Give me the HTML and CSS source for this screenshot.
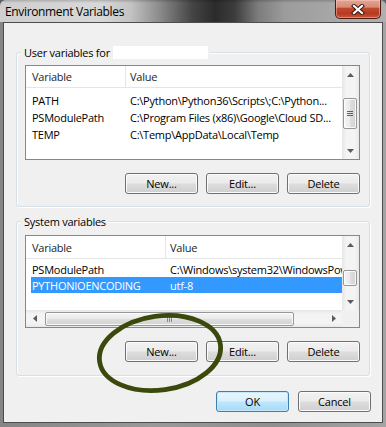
FILE: index.html
```html
<!DOCTYPE html>
<html>
<head>
<meta charset="utf-8">
<title>Environment Variables</title>
<link rel="stylesheet" href="styles.css">
</head>
<body>
<div class="window">
  <div class="titlebar">
    <span class="title">Environment Variables</span>
    <div class="close">
      <svg width="14" height="11" viewBox="0 0 14 11">
        <path d="M3 2 L11 9 M11 2 L3 9" stroke="#3b1a12" stroke-width="4.2" stroke-linecap="square" fill="none"/>
        <path d="M3 2 L11 9 M11 2 L3 9" stroke="#ffffff" stroke-width="2.2" stroke-linecap="square" fill="none"/>
      </svg>
    </div>
  </div>
  <div class="client">
    <section class="group group-user">
      <div class="group-label">User variables for <span class="redact"></span></div>
      <div class="list list-user">
        <div class="lv">
          <div class="lv-header"><div class="hcol hcol1">Variable</div><div class="hcol hcol2">Value</div></div>
          <div class="lv-body">
            <div class="lv-row"><span class="cell1">PATH</span><span class="cell2">C:\Python\Python36\Scripts\;C:\Python...</span></div>
            <div class="lv-row"><span class="cell1">PSModulePath</span><span class="cell2">C:\Program Files (x86)\Google\Cloud SD...</span></div>
            <div class="lv-row"><span class="cell1">TEMP</span><span class="cell2">C:\Temp\AppData\Local\Temp</span></div>
          </div>
        </div>
        <div class="vscroll">
          <div class="sb-arrow"><svg width="7" height="4" viewBox="0 0 7 4"><polygon points="0,4 3.5,0 7,4" fill="#5c5c5c"/></svg></div>
          <div class="sb-track-v">
            <div class="thumb-v thumb-user">
              <svg width="6" height="5" viewBox="0 0 6 5"><path d="M0 0.5H6M0 2.5H6M0 4.5H6" stroke="#616161" stroke-width="1"/></svg>
            </div>
          </div>
          <div class="sb-arrow"><svg width="7" height="4" viewBox="0 0 7 4"><polygon points="0,0 7,0 3.5,4" fill="#5c5c5c"/></svg></div>
        </div>
      </div>
      <div class="btn-row">
        <button class="btn">New...</button>
        <button class="btn">Edit...</button>
        <button class="btn">Delete</button>
      </div>
    </section>

    <section class="group group-sys">
      <div class="group-label">System variables</div>
      <div class="list list-sys">
        <div class="lv">
          <div class="lv-header"><div class="hcol hcol1">Variable</div><div class="hcol hcol2">Value</div></div>
          <div class="lv-body">
            <div class="lv-row"><span class="cell1">PSModulePath</span><span class="cell2">C:\Windows\system32\WindowsPowerShell\v1.0\Modules\</span></div>
            <div class="lv-row selected"><span class="cell1">PYTHONIOENCODING</span><span class="cell2">utf-8</span></div>
          </div>
        </div>
        <div class="vscroll">
          <div class="sb-arrow"><svg width="7" height="4" viewBox="0 0 7 4"><polygon points="0,4 3.5,0 7,4" fill="#5c5c5c"/></svg></div>
          <div class="sb-track-v">
            <div class="thumb-v thumb-sys"></div>
          </div>
          <div class="sb-arrow"><svg width="7" height="4" viewBox="0 0 7 4"><polygon points="0,0 7,0 3.5,4" fill="#5c5c5c"/></svg></div>
        </div>
        <div class="hscroll">
          <div class="sb-arrow-h"><svg width="4" height="7" viewBox="0 0 4 7"><polygon points="4,0 0,3.5 4,7" fill="#5c5c5c"/></svg></div>
          <div class="sb-track-h">
            <div class="thumb-h">
              <svg width="5" height="6" viewBox="0 0 5 6"><path d="M0.5 0V6M2.5 0V6M4.5 0V6" stroke="#8a8a8a" stroke-width="1"/></svg>
            </div>
          </div>
          <div class="sb-arrow-h"><svg width="4" height="7" viewBox="0 0 4 7"><polygon points="0,0 4,3.5 0,7" fill="#5c5c5c"/></svg></div>
        </div>
        <div class="sb-corner"></div>
      </div>
      <div class="btn-row">
        <button class="btn">New...</button>
        <button class="btn">Edit...</button>
        <button class="btn">Delete</button>
      </div>
    </section>

    <div class="dlg-row">
      <button class="btn btn-default">OK</button>
      <button class="btn">Cancel</button>
    </div>
  </div>

  <svg class="annot" width="386" height="427" viewBox="0 0 386 427">
    <ellipse cx="160" cy="353" rx="61" ry="37" transform="rotate(-8 160 353)" fill="none" stroke="#3b4a0c" stroke-width="4.8"/>
  </svg>
</div>
</body>
</html>
```

FILE: styles.css
```css
* { box-sizing: border-box; }

html, body {
  margin: 0;
  padding: 0;
}

body {
  width: 386px;
  height: 427px;
  overflow: hidden;
  background: #5b5f66;
  font-family: "Open Sans", "Noto Sans", sans-serif;
  font-size: 11px;
  letter-spacing: -0.25px;
  color: #000;
}

.window {
  position: relative;
  width: 386px;
  height: 427px;
  display: flex;
  flex-direction: column;
  border-radius: 6px 6px 0 0;
  overflow: hidden;
  background: linear-gradient(to right, #858585, #9a9a9a 40%, #8f8f8f 70%, #a4a4a4);
}

.titlebar {
  height: 22px;
  display: flex;
  align-items: center;
  padding: 2px 0 0 5px;
  background:
    linear-gradient(to bottom, rgba(0,0,0,0.18) 0, rgba(0,0,0,0) 3px),
    linear-gradient(to right, #cfcfcf 0px, #d8d8d8 100px, #c4c4c4 130px, #8a8a8a 160px, #454545 192px, #2b2b2b 215px, #3d3d3d 235px, #7c7c7c 258px, #9c9c9c 285px, #a6a6a6 330px, #b0b0b0 386px);
}

.title {
  font-size: 12px;
  letter-spacing: -0.35px;
  color: #000;
  line-height: 16px;
}

.close {
  margin-left: auto;
  margin-right: 5px;
  align-self: flex-start;
  margin-top: -2px;
  width: 46px;
  height: 19px;
  border: 1px solid #4b1c12;
  border-top: none;
  border-radius: 0 0 5px 5px;
  display: flex;
  align-items: center;
  justify-content: center;
  background:
    linear-gradient(to bottom, #e4a595 0%, #d88a76 40%, #c24a2f 45%, #b73a20 75%, #c9553a 100%);
  box-shadow: inset 0 0 0 1px rgba(255, 210, 200, 0.45);
}

.client {
  flex: 1;
  margin: 0 3px 4px 3px;
  border: 1px solid #4d4d4d;
  background: #f0f0f0;
  display: flex;
  flex-direction: column;
  padding: 0 12px;
}

.group {
  border: 1px solid #d5dfe5;
  border-radius: 3px;
  box-shadow: inset 1px 1px 0 #ffffff, 1px 1px 0 #ffffff;
  display: flex;
  flex-direction: column;
  padding: 0 9px 12px 8px;
}

.group-user {
  margin-top: 29px;
}

.group-sys {
  margin-top: 14px;
  padding-bottom: 13px;
}

.group-label {
  align-self: flex-start;
  display: flex;
  align-items: center;
  height: 16px;
  margin: -9px 0 0 -4px;
  padding: 0 2px 0 3px;
  background: #f0f0f0;
  white-space: pre;
}

.redact {
  display: inline-block;
  width: 95px;
  height: 13px;
  background: #ffffff;
}

.list {
  margin-top: 5px;
  border: 1px solid #828790;
  background: #ffffff;
  display: grid;
  grid-template-columns: 1fr 17px;
  overflow: hidden;
}

.list-user {
  height: 95px;
  --c1: 100px;
}

.list-sys {
  margin-top: 6px;
  height: 93px;
  grid-template-rows: 1fr 17px;
  --c1: 140px;
}

.lv {
  overflow: hidden;
  min-width: 0;
  white-space: nowrap;
}

.lv-header {
  display: flex;
  height: 22px;
  border-bottom: 1px solid #e5e5e5;
  background: #ffffff;
}

.list-sys .lv-header {
  height: 23px;
}

.hcol {
  display: flex;
  align-items: center;
  color: #1e1e1e;
}

.hcol1 {
  width: var(--c1);
  flex: none;
  padding-left: 6px;
  border-right: 1px solid #e5e5e5;
}

.hcol2 {
  flex: 1;
  padding-left: 4px;
}

.lv-body {
  padding-top: 4px;
}

.list-sys .lv-body {
  padding-top: 2px;
}

.lv-row {
  display: flex;
  height: 17px;
  align-items: center;
  margin-left: 5px;
}

.list-sys .lv-row {
  height: 16px;
}

.lv-row.selected {
  background: #3399ff;
  color: #ffffff;
}

.cell1 {
  width: calc(var(--c1) - 5px);
  flex: none;
  padding-left: 1px;
  overflow: hidden;
}

.cell2 {
  padding-left: 4px;
}

.vscroll {
  display: flex;
  flex-direction: column;
  background: linear-gradient(to right, #e6e6e6, #f4f4f4 25%, #f4f4f4 75%, #e9e9e9);
}

.sb-arrow {
  height: 17px;
  flex: none;
  display: flex;
  align-items: center;
  justify-content: center;
}

.sb-track-v {
  flex: 1;
  display: flex;
  flex-direction: column;
}

.thumb-v {
  width: 14px;
  margin-left: 1px;
  border: 1px solid #979797;
  border-radius: 2px;
  background: linear-gradient(to right, #f4f4f4, #ececec 45%, #dcdcdc 55%, #d4d4d4);
  box-shadow: inset 0 0 0 1px rgba(255,255,255,0.8);
  display: flex;
  align-items: center;
  justify-content: center;
}

.thumb-user {
  margin-top: 15px;
  height: 31px;
}

.thumb-sys {
  margin-top: 17px;
  height: 16px;
}

.hscroll {
  display: flex;
  background: linear-gradient(to bottom, #e6e6e6, #f4f4f4 25%, #f4f4f4 75%, #e9e9e9);
}

.sb-arrow-h {
  width: 17px;
  flex: none;
  display: flex;
  align-items: center;
  justify-content: center;
}

.sb-track-h {
  flex: 1;
  display: flex;
  align-items: center;
}

.thumb-h {
  margin-left: 2px;
  width: 249px;
  height: 14px;
  border: 1px solid #979797;
  border-radius: 2px;
  background: linear-gradient(to bottom, #f4f4f4, #ececec 45%, #dcdcdc 55%, #d4d4d4);
  box-shadow: inset 0 0 0 1px rgba(255,255,255,0.8);
  display: flex;
  align-items: center;
  justify-content: center;
}

.sb-corner {
  background: #f0f0f0;
}

.btn-row {
  display: flex;
  justify-content: flex-end;
  gap: 8px;
  margin-top: 13px;
}

.btn {
  width: 73px;
  height: 21px;
  padding: 0;
  margin: 0;
  font-family: inherit;
  font-size: 11px;
  letter-spacing: -0.2px;
  color: #000;
  border: 1px solid #707070;
  border-radius: 3px;
  background: linear-gradient(to bottom, #f2f2f2 0%, #ebebeb 48%, #dddddd 52%, #cfcfcf 100%);
  box-shadow: inset 0 0 0 1px #fbfbfb;
}

.btn-default {
  border-color: #3c7fb1;
  background: linear-gradient(to bottom, #eaf6fd 0%, #d9f0fc 48%, #bee6fd 52%, #a7d9f5 100%);
  box-shadow: inset 0 0 0 1px #c5e7fa;
}

.dlg-row {
  display: flex;
  justify-content: flex-end;
  gap: 9px;
  margin-top: 15px;
  margin-right: -1px;
}

.annot {
  position: absolute;
  left: 0;
  top: 0;
  pointer-events: none;
}
```
